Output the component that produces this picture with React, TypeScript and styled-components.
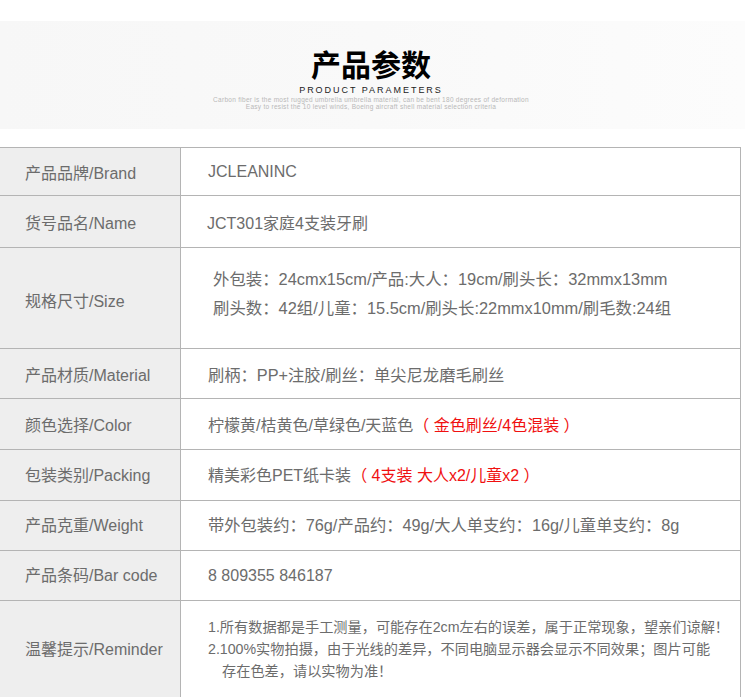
import styled, { createGlobalStyle } from 'styled-components'

const GlobalStyle = createGlobalStyle`
  html, body { margin: 0; padding: 0; background: #fff; }
  body { font-family: "Liberation Sans", "Noto Sans CJK SC", sans-serif; overflow: hidden; }
`

const Page = styled.div`
  width: 750px;
  height: 697px;
  overflow: hidden;
  padding-top: 21px;
  box-sizing: border-box;
`

const Banner = styled.div`
  width: 745px;
  height: 108px;
  background: linear-gradient(90deg, #f7f7f7 0%, #f9f9f9 50%, #fcfcfc 100%);
  display: flex;
  flex-direction: column;
  align-items: center;
  padding-top: 28px;
  padding-right: 3px;
  box-sizing: border-box;
`

const Title = styled.h1`
  margin: 0;
  font-size: 30px;
  line-height: 34px;
  font-weight: 700;
  color: #000;
`

const SubTitle = styled.div`
  font-size: 9px;
  line-height: 12px;
  margin-top: 1px;
  letter-spacing: 1.97px;
  color: #222;
`

const Tiny = styled.div`
  font-size: 6.5px;
  line-height: 6px;
  margin-top: 1px;
  letter-spacing: 0.28px;
  text-align: center;
  white-space: nowrap;
  color: #b8b8b8;
`

const Table = styled.div`
  width: 741px;
  box-sizing: border-box;
  margin-top: 18px;
  border-top: 1px solid #b4b4b4;
  border-right: 1px solid #b4b4b4;
`

const Row = styled.div<{ $height: number }>`
  display: grid;
  grid-template-columns: 181px 1fr;
  height: ${p => p.$height}px;
  border-bottom: 1px solid #b4b4b4;
  box-sizing: border-box;
`

const Label = styled.div<{ $lift?: number; $drop?: number }>`
  display: flex;
  align-items: center;
  padding-left: 25px;
  padding-bottom: ${p => p.$lift ?? 0}px;
  padding-top: ${p => p.$drop ?? 0}px;
  background: #eeeeee;
  border-right: 1px solid #b4b4b4;
  font-size: 16px;
  color: #6c6c6c;
`

const Value = styled.div<{ $indent?: number; $size?: number; $lift?: number }>`
  display: flex;
  flex-direction: column;
  justify-content: center;
  padding-left: ${p => p.$indent ?? 27}px;
  padding-bottom: ${p => p.$lift ?? 0}px;
  font-size: ${p => p.$size ?? 16}px;
  white-space: nowrap;
  color: #6c6c6c;
`

const SizeLines = styled(Value)`
  justify-content: flex-start;
  padding-top: 17px;
  line-height: 29px;
`

const Notes = styled(Value)`
  line-height: 22px;
`

const NoteIndent = styled.span`
  padding-left: 14px;
`

const Red = styled.span`
  color: #f01010;
`

export default function App() {
  return (
    <Page>
      <GlobalStyle />
      <Banner>
        <Title>产品参数</Title>
        <SubTitle>PRODUCT PARAMETERS</SubTitle>
        <Tiny>Carbon fiber is the most rugged umbrella umbrella material, can be bent 180 degrees of deformation</Tiny>
        <Tiny>Easy to resist the 10 level winds, Boeing aircraft shell material selection criteria</Tiny>
      </Banner>
      <Table>
        <Row $height={48}>
          <Label>产品品牌/Brand</Label>
          <Value>JCLEANINC</Value>
        </Row>
        <Row $height={52}>
          <Label>货号品名/Name</Label>
          <Value $indent={26}>JCT301家庭4支装牙刷</Value>
        </Row>
        <Row $height={101}>
          <Label $drop={4}>规格尺寸/Size</Label>
          <SizeLines $indent={32} $size={16.4}>
            <span>外包装：24cmx15cm/产品:大人：19cm/刷头长：32mmx13mm</span>
            <span>刷头数：42组/儿童：15.5cm/刷头长:22mmx10mm/刷毛数:24组</span>
          </SizeLines>
        </Row>
        <Row $height={50}>
          <Label>产品材质/Material</Label>
          <Value $size={16.3}>刷柄：PP+注胶/刷丝：单尖尼龙磨毛刷丝</Value>
        </Row>
        <Row $height={51}>
          <Label>颜色选择/Color</Label>
          <Value>
            <span>柠檬黄/桔黄色/草绿色/天蓝色<Red>（ 金色刷丝/4色混装 ）</Red></span>
          </Value>
        </Row>
        <Row $height={51}>
          <Label $lift={2}>包装类别/Packing</Label>
          <Value $lift={2}>
            <span>精美彩色PET纸卡装<Red>（ 4支装 大人x2/儿童x2 ）</Red></span>
          </Value>
        </Row>
        <Row $height={50}>
          <Label $lift={4}>产品克重/Weight</Label>
          <Value $size={16.3} $lift={4}>带外包装约：76g/产品约：49g/大人单支约：16g/儿童单支约：8g</Value>
        </Row>
        <Row $height={50}>
          <Label $lift={4}>产品条码/Bar code</Label>
          <Value>8 809355 846187</Value>
        </Row>
        <Row $height={97}>
          <Label $lift={2}>温馨提示/Reminder</Label>
          <Notes $size={14.2}>
            <span>1.所有数据都是手工测量，可能存在2cm左右的误差，属于正常现象，望亲们谅解！</span>
            <span>2.100%实物拍摄，由于光线的差异，不同电脑显示器会显示不同效果；图片可能</span>
            <NoteIndent>存在色差，请以实物为准！</NoteIndent>
          </Notes>
        </Row>
      </Table>
    </Page>
  )
}
